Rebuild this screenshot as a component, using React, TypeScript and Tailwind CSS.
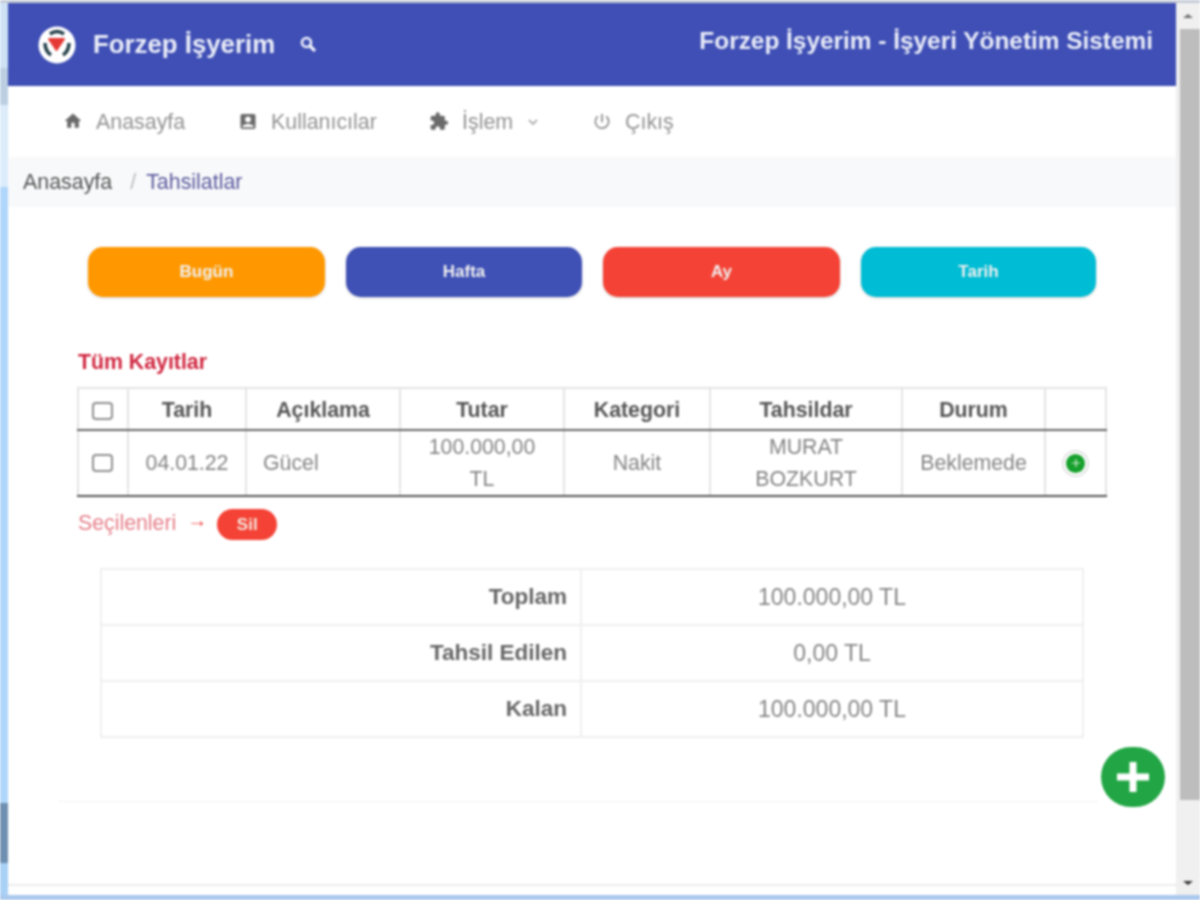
import { MdHome, MdKeyboardArrowDown, MdPowerSettingsNew, MdExtension, MdAccountBox, MdAdd } from "react-icons/md";

const Logo = () => (
  <svg width="38" height="38" viewBox="0 0 38 38">
    <circle cx="19" cy="19" r="18.5" fill="#fff" />
    <path d="M11 13 L26 13 L18.5 24 Z" fill="#e53935" stroke="#e53935" strokeWidth="2" strokeLinejoin="round" />
    <path d="M12 8 Q19 3 26 8" fill="none" stroke="#24404a" strokeWidth="3.5" />
    <path d="M7 17 Q7 25 13 29" fill="none" stroke="#24404a" strokeWidth="3.5" />
    <path d="M31 17 Q31 25 25 29" fill="none" stroke="#24404a" strokeWidth="3.5" />
  </svg>
);

const NavItem = ({ icon, label, extra, w }: { icon: React.ReactNode; label: string; extra?: React.ReactNode; w: string }) => (
  <div className={`flex items-center ${w}`}>
    <span className="flex w-[20px] justify-center text-[#6a6a6a]">{icon}</span>
    <span className="mt-[2px] ml-[13px] text-[21.4px] text-[#939393]">{label}</span>
    {extra}
  </div>
);

const Btn = ({ label, color, w }: { label: string; color: string; w: string }) => (
  <div className={`flex h-[50px] items-center justify-center rounded-[15px] text-[17px] font-bold text-[#f0f0f0] shadow-[0_1px_3px_rgba(0,0,0,0.18)] ${color} ${w}`}>
    {label}
  </div>
);

const th = "border-2 border-[#e4e4e4] border-b-[#666] font-bold text-[#555] text-[21.3px] text-center p-0 pt-[3px]";
const td = "border-2 border-[#e4e4e4] border-b-[#555] text-[#858585] text-[21.3px] leading-[32px] text-center p-0";

const Box = () => (
  <span className="mx-auto block h-[18px] w-[21px] -translate-x-[1px] rounded-[4px] border-2 border-[#8f8f8f] bg-white" />
);

const Total = ({ a, b }: { a: string; b: string }) => (
  <tr className="h-[56px]">
    <td className="border-2 border-[#efefef] pr-[13px] text-right text-[22.5px] font-bold text-[#666]">{a}</td>
    <td className="w-[502px] border-2 border-[#efefef] text-center text-[23px] text-[#858585]">{b}</td>
  </tr>
);

export default function App() {
  return (
    <div className="flex h-[900px] w-[1200px] flex-col overflow-hidden bg-[#a9d0f5] font-['Liberation_Sans',Arial,sans-serif] blur-[0.8px]">
      <div className="h-[3px] bg-[#c5cbd6]" />
      <div className="flex min-h-0 flex-1">
        <div className="flex w-[8px] flex-col">
          <div className="h-[65px] bg-[#cfe2f5]" />
          <div className="h-[37px] bg-[#bccfe2]" />
          <div className="h-[82px] bg-[#dcecfb]" />
          <div className="flex-1 bg-[#b0d6fb]" />
          <div className="h-[60px] bg-[#6f8fb0]" />
          <div className="h-[32px] bg-[#a9d0f5]" />
        </div>
        <main className="relative flex w-[1168px] flex-col bg-white">
          <header className="flex h-[83px] items-center justify-between bg-[#3f4fb5] pr-[23px] pl-[30px] text-[#f1f3fb]">
            <div className="flex items-center">
              <Logo />
              <span className="ml-[17px] text-[25.8px] font-bold text-[#e9ecf8]">Forzep İşyerim</span>
              <svg className="-mt-[2px] ml-[25px]" width="16" height="16" viewBox="0 0 16 16" fill="none" stroke="currentColor">
                <circle cx="6.5" cy="6.5" r="4.5" strokeWidth="2.6" />
                <path d="M10 10 L15 15" strokeWidth="3.2" />
              </svg>
            </div>
            <span className="-mt-[6px] text-[24.4px] font-bold text-[#e9ecf8]">Forzep İşyerim - İşyeri Yönetim Sistemi</span>
          </header>
          <nav className="flex h-[71px] items-center bg-white pl-[55px] shadow-[0_1px_2px_rgba(0,0,0,0.06)]">
            <NavItem w="w-[175px]" label="Anasayfa" icon={<MdHome size={22} />} />
            <NavItem w="w-[191px]" label="Kullanıcılar" icon={<MdAccountBox size={23} />} />
            <NavItem
              w="w-[163px]"
              label="İşlem"
              icon={<MdExtension size={25} />}
              extra={<MdKeyboardArrowDown className="mt-[2px] ml-[11px] text-[#999]" size={18} />}
            />
            <NavItem w="w-[100px]" label="Çıkış" icon={<MdPowerSettingsNew size={23} className="text-[#888]" />} />
          </nav>
          <div className="flex h-[50px] items-center bg-[#f8f9fa] pl-[15px] text-[21.4px]">
            <span className="text-[#555]">Anasayfa</span>
            <span className="ml-[18px] text-[#bbb]">/</span>
            <span className="ml-[10px] text-[#5a5a9e]">Tahsilatlar</span>
          </div>

          <div className="mt-[40px] flex gap-[21px] pl-[80px]">
            <Btn label="Bugün" color="bg-[#ff9800]" w="w-[237px]" />
            <Btn label="Hafta" color="bg-[#3f51b5]" w="w-[236px]" />
            <Btn label="Ay" color="bg-[#f44336]" w="w-[237px]" />
            <Btn label="Tarih" color="bg-[#00bcd4]" w="w-[235px]" />
          </div>

          <h2 className="mt-[52px] ml-[70px] text-[21.3px] leading-[26px] font-bold text-[#d0263f]">Tüm Kayıtlar</h2>

          <table className="mt-[12px] ml-[69px] w-[1028px] table-fixed border-collapse">
            <colgroup>
              <col className="w-[50px]" />
              <col className="w-[118px]" />
              <col className="w-[154px]" />
              <col className="w-[164px]" />
              <col className="w-[146px]" />
              <col className="w-[192px]" />
              <col className="w-[143px]" />
              <col className="w-[61px]" />
            </colgroup>
            <thead>
              <tr className="h-[42px]">
                <th className={th}><Box /></th>
                <th className={th}>Tarih</th>
                <th className={th}>Açıklama</th>
                <th className={th}>Tutar</th>
                <th className={th}>Kategori</th>
                <th className={th}>Tahsildar</th>
                <th className={th}>Durum</th>
                <th className={th} />
              </tr>
            </thead>
            <tbody>
              <tr className="h-[65px]">
                <td className={td}><Box /></td>
                <td className={td}>04.01.22</td>
                <td className={`${td} pl-[16px] text-left`}>Gücel</td>
                <td className={td}>100.000,00<br />TL</td>
                <td className={td}>Nakit</td>
                <td className={td}>MURAT<br />BOZKURT</td>
                <td className={td}>Beklemede</td>
                <td className={td}>
                  <span className="mx-auto flex h-[27px] w-[27px] items-center justify-center rounded-full border-2 border-[#e2e2e2] bg-white">
                    <span className="flex h-[19px] w-[19px] items-center justify-center rounded-full bg-[#16a02c]">
                      <MdAdd size={14} className="text-[#d8f0d8]" />
                    </span>
                  </span>
                </td>
              </tr>
            </tbody>
          </table>

          <div className="mt-[12px] ml-[70px] flex items-center">
            <span className="-mt-[2px] text-[21.3px] text-[#e57f8a]">Seçilenleri</span>
            <span className="-mt-[9px] ml-[11px] text-[20px] leading-none font-bold text-[#ee4444]">→</span>
            <span className="ml-[10px] flex h-[31px] w-[60px] items-center justify-center rounded-full bg-[#f44336] text-[17px] font-bold text-[#f5e6dc]">Sil</span>
          </div>

          <table className="mt-[28px] ml-[92px] w-[984px] border-collapse">
            <tbody>
              <Total a="Toplam" b="100.000,00 TL" />
              <Total a="Tahsil Edilen" b="0,00 TL" />
              <Total a="Kalan" b="100.000,00 TL" />
            </tbody>
          </table>

          <div className="mt-[63px] ml-[50px] h-px w-[1040px] bg-[#f3f3f3]" />

          <div className="absolute top-[744px] left-[1093px] flex h-[60px] w-[64px] items-center justify-center rounded-full bg-[#22a645]">
            <svg width="32" height="30" viewBox="0 0 32 30">
              <rect x="0" y="11.5" width="32" height="7" fill="#fff" />
              <rect x="12.5" y="0" width="7" height="30" fill="#fff" />
            </svg>
          </div>

          <div className="mt-auto h-[11px] border-t-2 border-[#ececec] bg-white" />
        </main>
        <aside className="flex w-[24px] flex-col items-center bg-[#f0f0f0]">
          <div className="flex h-[26px] w-full items-center justify-center">
            <span className="h-0 w-0 border-x-[5px] border-b-[4px] border-x-transparent border-b-[#707070]" />
          </div>
          <div className="ml-[3px] h-[771px] w-[20px] bg-[#bdbdbd]" />
          <div className="flex-1" />
          <div className="flex h-[24px] w-full items-center justify-center">
            <span className="h-0 w-0 border-x-[5px] border-t-[4px] border-x-transparent border-t-[#333]" />
          </div>
        </aside>
      </div>
      <div className="h-[5px] bg-[#a9c8ee]" />
    </div>
  );
}
